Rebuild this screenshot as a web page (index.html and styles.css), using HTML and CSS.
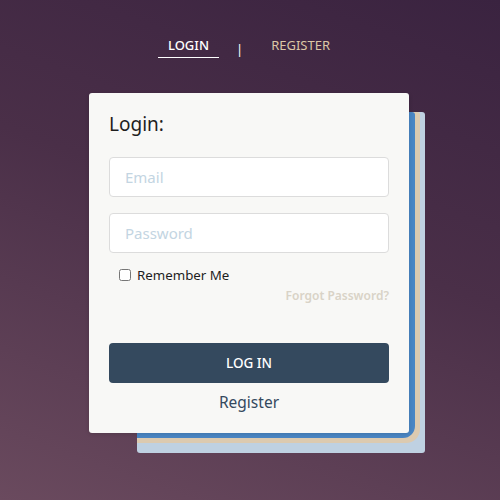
FILE: index.html
```html
<!DOCTYPE html>
<html>
<head>
<meta charset="utf-8">
<link rel="stylesheet" href="styles.css">
</head>
<body>
<nav class="tabs">
  <a class="tab active">LOGIN</a>
  <span class="sep">|</span>
  <a class="tab">REGISTER</a>
</nav>
<div class="wrap">
  <div class="stack"></div>
  <form class="card">
    <h2 class="title">Login:</h2>
    <input class="field" type="text" placeholder="Email">
    <input class="field" type="password" placeholder="Password">
    <label class="remember"><input class="check" type="checkbox"><span>Remember Me</span></label>
    <div class="forgot-row"><a class="forgot">Forgot Password?</a></div>
    <button class="btn" type="button">LOG IN</button>
    <div class="register-row"><a class="register">Register</a></div>
  </form>
</div>
</body>
</html>
```
FILE: styles.css
```css
html, body {
  margin: 0;
  width: 500px;
  height: 500px;
}
body {
  font-family: "Noto Sans", "Open Sans", sans-serif;
  background: linear-gradient(200deg, #3a2340 0%, #4a2f48 45%, #6a4a5e 100%);
  overflow: hidden;
}
.tabs {
  display: flex;
  justify-content: center;
  align-items: center;
  padding: 36px 2px 0 0;
}
.tab {
  font-size: 13px;
  line-height: 18px;
  padding: 0 10px 3px;
  border-bottom: 1px solid transparent;
  color: #dcc7a6;
}
.tab.active {
  color: #ffffff;
  font-weight: 500;
  border-bottom-color: #ffffff;
}
.sep {
  margin: 4px 18px 0 17px;
  color: #ffffff;
  font-size: 13px;
  line-height: 18px;
}
.wrap {
  position: relative;
  width: 320px;
  margin: 35px 0 0 89px;
}
.stack {
  position: absolute;
  left: 48px;
  top: 19px;
  width: 288px;
  height: 341px;
  background: #bfd1e2;
  border-radius: 3px;
}
.stack::before {
  content: "";
  position: absolute;
  left: 0;
  top: 0;
  width: 283px;
  height: 331px;
  background: #dccab0;
  border-radius: 0 3px 14px 0;
}
.stack::after {
  content: "";
  position: absolute;
  left: 0;
  top: 0;
  width: 278px;
  height: 326px;
  background: #4a86c4;
  border-radius: 0 3px 12px 0;
}
.card {
  position: relative;
  display: flex;
  flex-direction: column;
  box-sizing: border-box;
  height: 340px;
  padding: 19px 20px 0;
  background: #f8f8f6;
  border-radius: 3px;
  box-shadow: 0 1px 4px rgba(0,0,0,0.15);
}
.title {
  margin: 0 0 21px;
  font-size: 19px;
  line-height: 24px;
  font-weight: normal;
  color: #1e1e1e;
}
.field {
  box-sizing: border-box;
  height: 40px;
  margin: 0 0 16px;
  padding: 0 15px;
  border: 1px solid #dcdcdc;
  border-radius: 4px;
  background: #ffffff;
  font-family: inherit;
  font-size: 15px;
  color: #333;
}
.field::placeholder {
  color: #c3d5e2;
}
.remember {
  display: flex;
  align-items: center;
  padding-left: 10px;
  font-size: 13.3px;
  line-height: 20px;
  color: #1e1e1e;
  margin-top: -4px;
}
.check {
  width: 12px;
  height: 12px;
  margin: 0 6px 0 0;
}
.forgot-row {
  display: flex;
  justify-content: flex-end;
  margin-top: 2px;
}
.forgot {
  font-size: 12px;
  line-height: 18px;
  font-weight: 600;
  color: #d9d3c7;
}
.btn {
  height: 40px;
  margin-top: 38px;
  border: 0;
  border-radius: 4px;
  background: #34495e;
  color: #ffffff;
  font-family: inherit;
  font-size: 13.5px;
  font-weight: 500;
}
.register-row {
  display: flex;
  justify-content: center;
  margin-top: 8px;
}
.register {
  font-size: 15.5px;
  line-height: 22px;
  color: #34495e;
}
```
